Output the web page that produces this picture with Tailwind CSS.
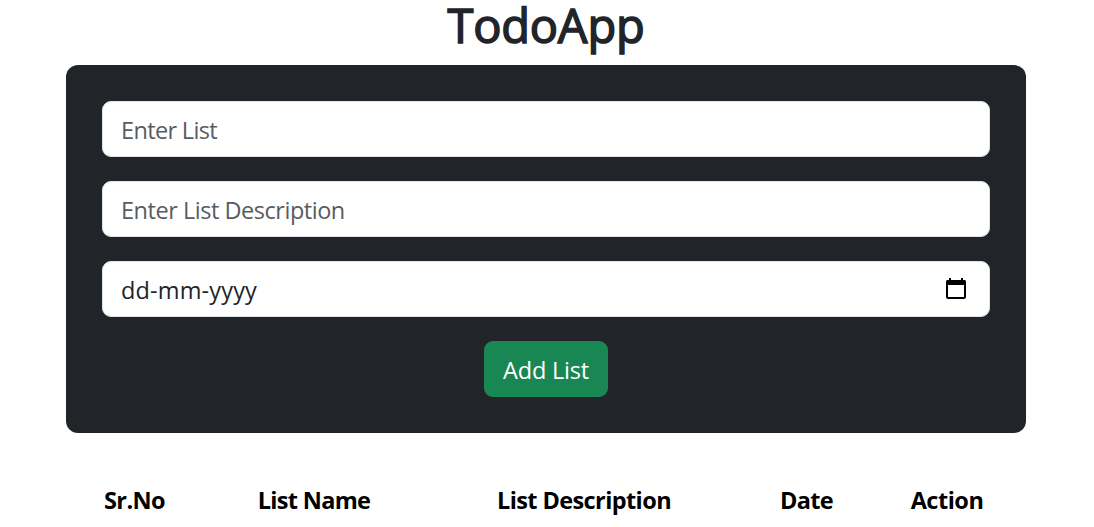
<!DOCTYPE html>
<html lang="en">
<head>
<meta charset="utf-8">
<title>TodoApp</title>
<script src="https://cdn.jsdelivr.net/npm/@tailwindcss/browser@4"></script>
</head>
<body class="bg-white font-['Open_Sans','Noto_Sans',sans-serif] text-[#212529] overflow-x-hidden">
<main class="ml-[66px] w-[960px]">
  <h1 class="h-[65px] text-center text-[47px] leading-[50px] font-medium tracking-[-0.2px] [-webkit-text-stroke:1.5px_#212529]">TodoApp</h1>
  <form class="h-[368px] rounded-[12px] bg-[#212529] p-9 flex flex-col gap-6 items-center text-[23.5px]">
    <div class="h-14 w-full shrink-0 rounded-[9px] border border-[#dee2e6] bg-white px-[18px] pt-1 flex items-center text-[#595c5f] tracking-[-0.65px]"><span>Enter List</span></div>
    <div class="h-14 w-full shrink-0 rounded-[9px] border border-[#dee2e6] bg-white px-[18px] pt-1 flex items-center text-[#595c5f] tracking-[-0.47px]"><span>Enter List Description</span></div>
    <div class="h-14 w-full shrink-0 rounded-[9px] border border-[#dee2e6] bg-white pl-[18px] pr-[22px] flex items-center justify-between">
      <span class="pt-1 tracking-[0.15px]">dd-mm-yyyy</span>
      <svg class="w-[22px] h-[22px]" viewBox="0 0 22 22" fill="none" aria-hidden="true"><path d="M1.5 2.5h19V7h-19z" fill="#000"/><path d="M5 0v3M17 0v3" stroke="#000" stroke-width="2"/><rect x="2" y="3" width="18" height="17" rx="1" stroke="#000" stroke-width="2"/></svg>
    </div>
    <button type="button" class="h-14 w-[124px] shrink-0 rounded-[9px] bg-[#198754] pt-1 text-white tracking-[-0.2px]">Add List</button>
  </form>
  <table class="mt-[43px] ml-[23px] w-[912px] table-fixed text-[23.5px] leading-9 text-black">
    <thead>
      <tr>
        <th class="w-[91px] p-0 py-[6px] font-bold tracking-[-0.6px]">Sr.No</th>
        <th class="w-[268px] p-0 font-bold tracking-[-0.7px]">List Name</th>
        <th class="w-[272px] p-0 font-bold tracking-[-0.6px]">List Description</th>
        <th class="w-[173px] p-0 font-bold tracking-[-0.7px]">Date</th>
        <th class="w-[108px] p-0 font-bold tracking-[-0.5px]">Action</th>
      </tr>
    </thead>
  </table>
</main>
</body>
</html>
